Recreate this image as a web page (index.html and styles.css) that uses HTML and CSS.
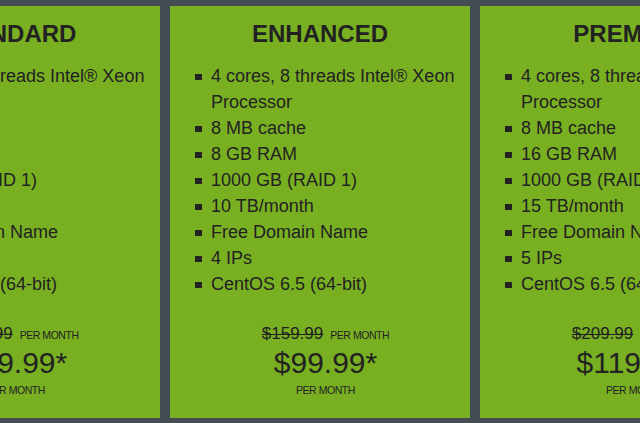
FILE: index.html
```html
<!DOCTYPE html>
<html lang="en">
<head>
<meta charset="utf-8">
<title>Plans</title>
<link rel="stylesheet" href="styles.css">
</head>
<body>
<div class="plans">
  <section class="card">
    <h2 class="title">STANDARD</h2>
    <ul class="features">
      <li>4 cores, 8 threads Intel® Xeon Processor</li>
      <li>8 MB cache</li>
      <li>4 GB RAM</li>
      <li>500 GB (RAID 1)</li>
      <li>5 TB/month</li>
      <li>Free Domain Name</li>
      <li>3 IPs</li>
      <li>CentOS 6.5 (64-bit)</li>
    </ul>
    <div class="price">
      <div class="old"><s>$119.99</s><span class="per">PER MONTH</span></div>
      <div class="now">$79.99*</div>
      <div class="per">PER MONTH</div>
    </div>
  </section>
  <section class="card">
    <h2 class="title">ENHANCED</h2>
    <ul class="features">
      <li>4 cores, 8 threads Intel® Xeon Processor</li>
      <li>8 MB cache</li>
      <li>8 GB RAM</li>
      <li>1000 GB (RAID 1)</li>
      <li>10 TB/month</li>
      <li>Free Domain Name</li>
      <li>4 IPs</li>
      <li>CentOS 6.5 (64-bit)</li>
    </ul>
    <div class="price">
      <div class="old"><s>$159.99</s><span class="per">PER MONTH</span></div>
      <div class="now">$99.99*</div>
      <div class="per">PER MONTH</div>
    </div>
  </section>
  <section class="card">
    <h2 class="title">PREMIUM</h2>
    <ul class="features">
      <li>4 cores, 8 threads Intel® Xeon Processor</li>
      <li>8 MB cache</li>
      <li>16 GB RAM</li>
      <li>1000 GB (RAID 1)</li>
      <li>15 TB/month</li>
      <li>Free Domain Name</li>
      <li>5 IPs</li>
      <li>CentOS 6.5 (64-bit)</li>
    </ul>
    <div class="price">
      <div class="old"><s>$209.99</s><span class="per">PER MONTH</span></div>
      <div class="now">$119.99*</div>
      <div class="per">PER MONTH</div>
    </div>
  </section>
</div>
</body>
</html>
```

FILE: styles.css
```css
html, body {
  margin: 0;
  padding: 0;
  background: #434c53;
  overflow: hidden;
  height: 423px;
}

body {
  font-family: "Liberation Sans", Arial, sans-serif;
  color: #222;
}

.plans {
  display: flex;
  gap: 10px;
  padding-top: 6px;
  margin-left: -140px;
  width: 1000px;
}

.card {
  flex: none;
  width: 300px;
  height: 412px;
  box-sizing: border-box;
  background: #79b022;
  padding: 14px 10px 0 26px;
}

.title {
  margin: 0 0 15px -16px;
  font-size: 24px;
  line-height: 28px;
  font-weight: bold;
  text-align: center;
  color: #222;
}

.features {
  list-style: none;
  margin: 0;
  padding: 0;
}

.features li {
  position: relative;
  padding-left: 15px;
  font-size: 18px;
  line-height: 26px;
}

.features li::before {
  content: "";
  position: absolute;
  left: -1px;
  top: 11px;
  width: 7px;
  height: 6px;
  background: #222;
}

.price {
  margin: 26px 0 0 -5px;
  text-align: center;
}

.old {
  font-size: 17px;
  line-height: 22px;
}

.old s {
  text-decoration-thickness: 1px;
}

.old .per {
  margin-left: 7px;
}

.per {
  font-size: 10.5px;
  letter-spacing: -0.45px;
  line-height: 14px;
}

.now {
  font-size: 30px;
  line-height: 34px;
  margin-top: 1px;
}

.price > .per {
  margin-top: 3px;
}
```
